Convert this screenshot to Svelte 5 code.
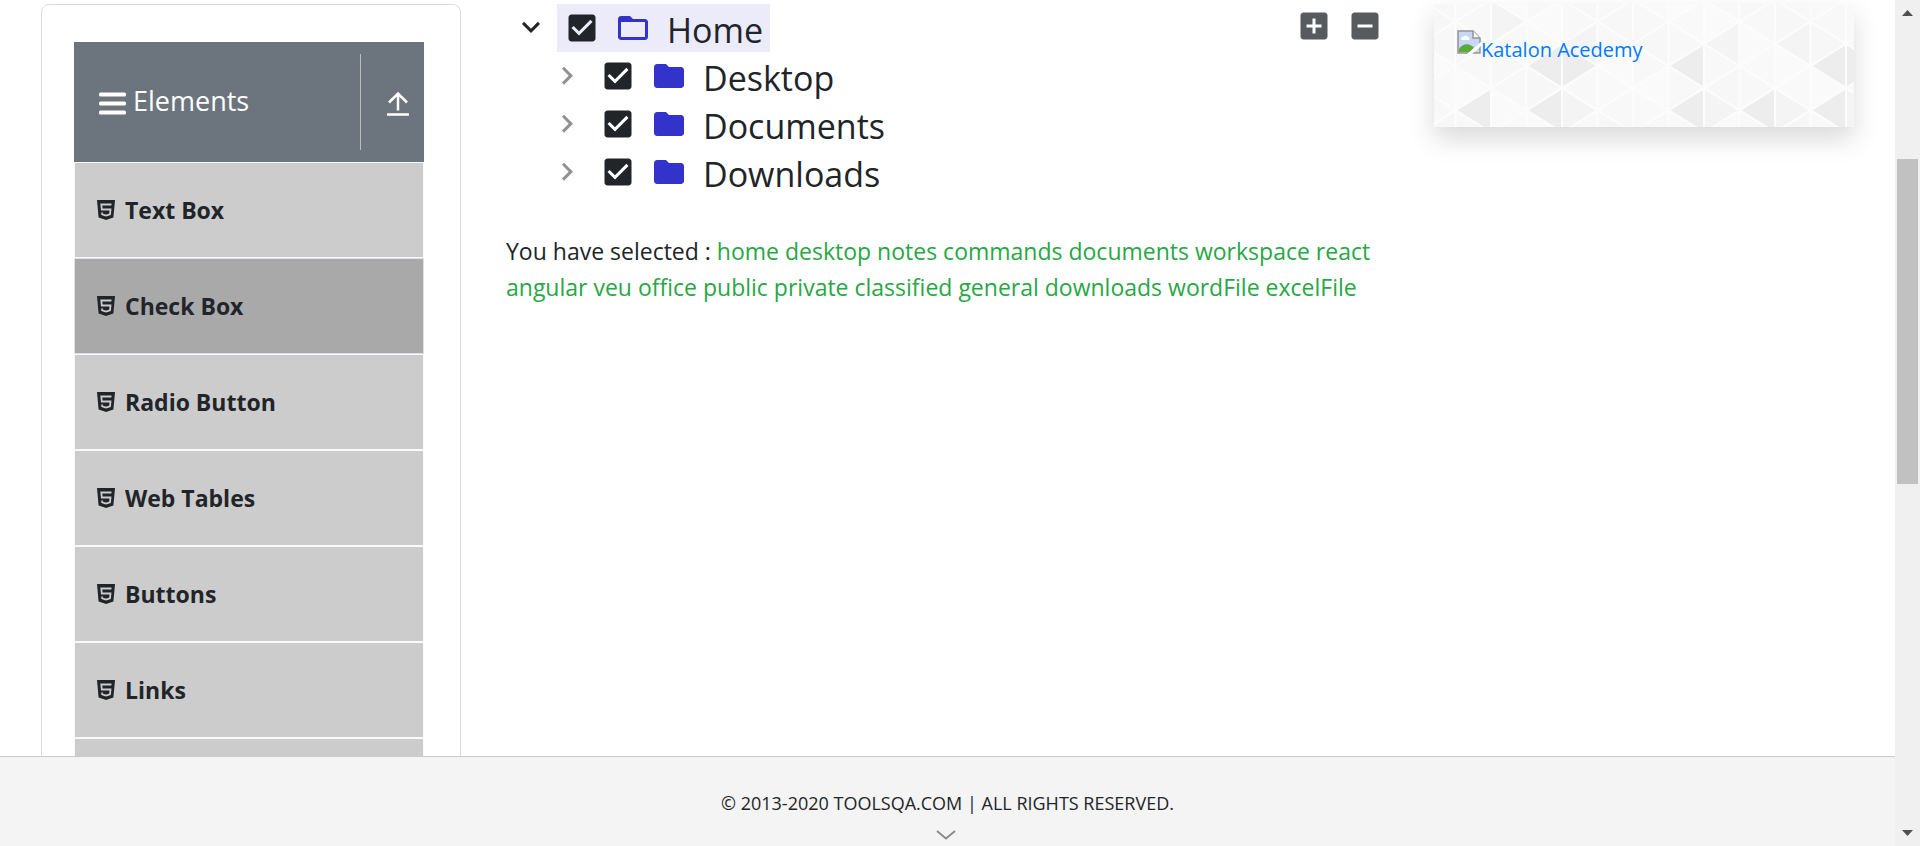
<script>
  const menu = ['Text Box', 'Check Box', 'Radio Button', 'Web Tables', 'Buttons', 'Links'];
  const active = 'Check Box';
  const folders = ['Desktop', 'Documents', 'Downloads'];
  const selected = [
    'home', 'desktop', 'notes', 'commands', 'documents', 'workspace', 'react', 'angular', 'veu',
    'office', 'public', 'private', 'classified', 'general', 'downloads', 'wordFile', 'excelFile'
  ];

  const stepX = 35.5;
  const stepY = 22.15;
  const dark = ['2,2', '3,2', '6,2', '10,2', '11,2', '0,4', '2,4', '6,4', '8,4', '10,4'];
  const medium = ['3,1', '7,1', '9,1', '1,0', '3,4', '7,4', '9,4', '11,4'];
  const light = ['#f8f8f8', '#fafafa', '#f7f7f7', '#f9f9f9', '#f8f8f8'];
  const triangles = [];
  for (let c = -1; c < 12; c++) {
    for (let r = -1; r < 7; r++) {
      const key = `${c},${r}`;
      const x0 = 21.5 + stepX * c;
      const x1 = x0 + stepX;
      const y = 17.7 + stepY * r;
      const left = (c + r) % 2 === 0;
      const tip = left ? x0 : x1;
      const side = left ? x1 : x0;
      triangles.push({
        points: `${tip},${y} ${side},${y - stepY} ${side},${y + stepY}`,
        fill: dark.includes(key) ? '#ededed' : medium.includes(key) ? '#f4f4f4' : light[(c * 3 + r * 2 + 10) % 5]
      });
    }
  }
</script>

{#snippet checkbox(name)}
  <span class="box">
    <input type="checkbox" id={name} checked />
    <svg viewBox="0 0 24 24" aria-hidden="true"><path d="M19 3H5c-1.11 0-2 .9-2 2v14c0 1.1.89 2 2 2h14c1.11 0 2-.9 2-2V5c0-1.1-.89-2-2-2zm-9 14l-5-5 1.41-1.41L10 14.17l7.59-7.59L19 8l-9 9z" /></svg>
  </span>
{/snippet}

<div class="window">
  <div class="page">
    <div class="content">
      <aside class="sidebar">
        <div class="group">
          <h2>
            <svg class="bars" viewBox="0 0 27 24" aria-hidden="true">
              <rect y="0.500" width="27" height="4" rx="1.500" /><rect y="9.500" width="27" height="4" rx="1.500" /><rect y="18.500" width="27" height="4" rx="1.500" />
            </svg>
            <span>Elements</span>
          </h2>
          <button class="collapse" aria-label="Collapse Elements">
            <svg viewBox="0 0 22 24"><path d="M11 18.500V2M2 10.500L11 1.500l9 9" /><path d="M0 22.500h22" /></svg>
          </button>
        </div>
        <ul class="menu">
          {#each menu as item}
            <li class:active={item === active}>
              <svg viewBox="0 0 18 20" aria-hidden="true">
                <path d="M0 0h18l-1.600 17.500L9 20l-7.400-2.500z" />
                <path class="cut" d="M14.500 4.500H4.300l.5 5h8.700l-.5 4.800L9 15.600l-3.800-1.300-.1-1.800" />
              </svg>
              <span>{item}</span>
            </li>
          {/each}
          <li></li>
        </ul>
      </aside>

      <main>
        <div class="tree-area">
          <ol class="tree">
            <li>
              <div class="row">
                <button class="toggle open" aria-label="Toggle Home"><svg viewBox="0 0 24 24"><path d="M7.410 7.840L12 12.420l4.590-4.580L18 9.250l-6 6-6-6z" /></svg></button>
                <span class="node focused">
                  {@render checkbox('home')}
                  <svg class="folder" viewBox="0 0 24 24" aria-hidden="true"><path d="M20 6h-8l-2-2H4c-1.100 0-1.990.9-1.990 2L2 18c0 1.100.9 2 2 2h16c1.100 0 2-.9 2-2V8c0-1.100-.9-2-2-2zm0 12H4V8h16v10z" /></svg>
                  <label for="home">Home</label>
                </span>
              </div>
              <ol>
                {#each folders as folder}
                  <li class="row">
                    <button class="toggle" aria-label="Toggle {folder}"><svg viewBox="0 0 24 24"><path d="M8.590 16.340l4.580-4.590-4.580-4.590L10 5.750l6 6-6 6z" /></svg></button>
                    <span class="node">
                      {@render checkbox(folder)}
                      <svg class="folder" viewBox="0 0 24 24" aria-hidden="true"><path d="M10 4H4c-1.100 0-1.990.9-1.990 2L2 18c0 1.100.9 2 2 2h16c1.100 0 2-.9 2-2V8c0-1.100-.9-2-2-2h-8l-2-2z" /></svg>
                      <label for={folder}>{folder}</label>
                    </span>
                  </li>
                {/each}
              </ol>
            </li>
          </ol>
          <div class="options">
            <button aria-label="Expand all"><svg viewBox="0 0 24 24"><path d="M19 3H5c-1.110 0-2 .9-2 2v14c0 1.100.89 2 2 2h14c1.100 0 2-.9 2-2V5c0-1.100-.9-2-2-2zm-2 10h-4v4h-2v-4H7v-2h4V7h2v4h4v2z" /></svg></button>
            <button aria-label="Collapse all"><svg viewBox="0 0 24 24"><path d="M19 3H5c-1.110 0-2 .9-2 2v14c0 1.100.89 2 2 2h14c1.100 0 2-.9 2-2V5c0-1.100-.9-2-2-2zm-2 10H7v-2h10v2z" /></svg></button>
          </div>
        </div>
        <p class="result">You have selected : {#each selected as word}<span>{word}</span>{' '}{/each}</p>
      </main>

      <aside class="promo">
        <svg class="pattern" viewBox="0 0 420 123" preserveAspectRatio="xMinYMin slice" aria-hidden="true">
          {#each triangles as t}
            <polygon points={t.points} fill={t.fill} />
          {/each}
        </svg>
        <a href="#katalon">
          <svg class="broken" viewBox="0 0 24 24" aria-hidden="true">
            <path d="M1 1h15l7 7v15H1z" fill="#c8d7f6" />
            <path d="M4 9a2 2 0 0 1 2-2 3 3 0 0 1 5 0 2 2 0 0 1 1 3H5z" fill="#fff" />
            <path d="M2 22v-3c4-6 11-6 15-1l-4 4z" fill="#5aab38" />
            <path d="M1 23V1h15l7 7v15z" fill="none" stroke="#949494" stroke-width="1.500" />
            <path d="M16 1v7h7" fill="#fff" stroke="#949494" stroke-width="1.500" />
            <path d="M10 24l14-12v4l-9 8z" fill="#fff" />
          </svg><span>Katalon Acedemy</span>
        </a>
      </aside>
    </div>

    <footer>
      <span>© 2013-2020 TOOLSQA.COM | ALL RIGHTS RESERVED.</span>
      <svg viewBox="0 0 20 10" aria-hidden="true"><path d="M1 1l9 7.500L19 1" /></svg>
    </footer>
  </div>

  <div class="scrollbar" aria-hidden="true">
    <svg viewBox="0 0 11 6"><path d="M5.500 0L11 6H0z" /></svg>
    <div class="track"><div class="thumb"></div></div>
    <svg viewBox="0 0 11 6"><path d="M5.500 6L11 0H0z" /></svg>
  </div>
</div>

<style>
  :global(body) {
    margin: 0;
    background: #fff;
    color: #212529;
    font-family: 'Segoe UI', 'Open Sans', 'Noto Sans', sans-serif;
    font-size: 23px;
    line-height: 36px;
  }
  * { box-sizing: border-box; }
  svg { display: block; flex: none; fill: currentColor; }
  button { border: 0; padding: 0; background: none; color: inherit; cursor: pointer; }
  ul, ol { list-style: none; margin: 0; padding: 0; }

  .window { display: flex; height: 100vh; overflow: hidden; }
  .page { flex: 1; min-width: 0; display: flex; flex-direction: column; }
  .content {
    flex: 1;
    min-height: 0;
    overflow: hidden;
    display: grid;
    grid-template-columns: 420px 1fr 420px;
    gap: 45px;
    align-items: start;
    padding: 4px 41px 0;
  }

  .sidebar { border: 1px solid #dcdcdc; border-radius: 8px; padding: 37px 36px 37px 32px; }
  .group {
    display: flex;
    align-items: stretch;
    height: 120px;
    padding: 12px 0;
    background: #6c757d;
    color: #fff;
  }
  h2 {
    flex: 1;
    display: flex;
    align-items: center;
    gap: 7px;
    margin: 0;
    padding-left: 25px;
    font-size: 27px;
    font-weight: 400;
  }
  h2 span { padding-bottom: 2px; }
  .bars { width: 27px; height: 24px; margin-top: 4px; }
  .collapse { width: 64px; border-left: 1px solid #bbb; padding: 4px 0 0 26px; }
  .collapse svg { width: 22px; height: 24px; fill: none; stroke: #fff; stroke-width: 2.5; }

  .menu li {
    display: flex;
    align-items: center;
    gap: 10px;
    height: 96px;
    padding: 0 22px;
    border: 1px solid #f8f9fa;
    background: #ccc;
    font-weight: 700;
  }
  .menu li.active { background: #a9a9a9; border-color: #dee2e6; }
  .menu svg { width: 18px; height: 20px; }
  .menu .cut { fill: none; stroke: #ccc; stroke-width: 1.8; }

  .tree-area { display: flex; align-items: flex-start; justify-content: space-between; }
  .tree { padding-left: 7px; font-size: 34px; }
  .tree ol { padding-left: 36px; }
  .row { display: flex; height: 48px; }
  .row svg { width: 36px; height: 36px; }
  .toggle { width: 44px; height: 48px; }
  .toggle svg { opacity: 0.5; }
  .toggle.open svg { opacity: 1; }
  .node { display: flex; align-items: center; padding: 0 7px; }
  .focused { background: #ebebfa; }
  .box { position: relative; margin-right: 15px; }
  .box input { position: absolute; inset: 0; width: 100%; height: 100%; margin: 0; opacity: 0; }
  .folder { color: #33c; margin-right: 16px; }
  .row label { line-height: 44px; padding-top: 4px; }

  .options { display: flex; gap: 15px; padding: 4px 6px 0 0; }
  .options svg { width: 36px; height: 36px; opacity: 0.75; }

  .result { margin: 37px 0 0; }
  .result span { color: #28a745; }

  .promo { position: relative; height: 123px; padding: 26px 23px; box-shadow: 0 12px 24px rgba(0, 0, 0, 0.15); }
  .pattern { position: absolute; inset: 0; width: 100%; height: 100%; }
  .pattern polygon { stroke: #fcfcfc; stroke-width: 2; stroke-linejoin: round; }
  .promo a { position: relative; display: flex; color: #007bff; text-decoration: none; font-size: 20px; }
  .promo a span { padding-top: 2px; }
  .broken { width: 24px; height: 24px; }

  footer {
    display: flex;
    flex-direction: column;
    align-items: center;
    height: 90px;
    padding-top: 28px;
    border-top: 1px solid #ccc;
    background: #f4f4f4;
    font-size: 18px;
  }
  footer svg { width: 20px; height: 10px; margin: 9px 4px 0 0; fill: none; stroke: #888; stroke-width: 1.8; }

  .scrollbar {
    width: 25px;
    display: flex;
    flex-direction: column;
    align-items: center;
    padding: 10px 0;
    background: #f0f0f0;
    color: #505050;
  }
  .scrollbar svg { width: 11px; height: 6px; }
  .track { flex: 1; align-self: stretch; padding: 0 2px; display: grid; grid-template-rows: 143fr 325fr 346fr; }
  .thumb { grid-row: 2; background: #c1c1c1; }
</style>
